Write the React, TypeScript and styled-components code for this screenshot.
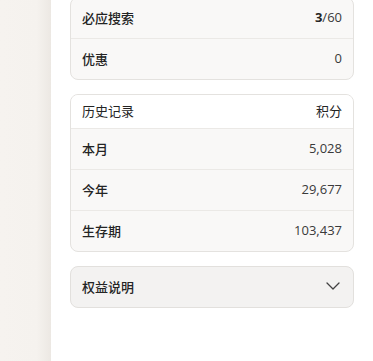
import React from 'react';
import styled, { createGlobalStyle } from 'styled-components';

const GlobalStyle = createGlobalStyle`
  html, body {
    margin: 0;
    padding: 0;
    background: #ffffff;
    overflow: hidden;
  }
  body {
    font-family: "Open Sans", "Noto Sans CJK SC", sans-serif;
    color: #242424;
  }
`;

const Page = styled.div`
  display: flex;
  width: 373px;
  height: 361px;
  overflow: hidden;
`;

const Sidebar = styled.div`
  width: 51px;
  flex-shrink: 0;
  background: linear-gradient(to right, #f6f3ef 0%, #f5f2ee 72%, #ece8e3 100%);
`;

const Main = styled.div`
  flex: 1;
  display: flex;
  flex-direction: column;
  gap: 14px;
  padding: 0 19px;
  margin-top: -3px;
`;

const Card = styled.div`
  border: 1px solid #e4e2df;
  border-radius: 8px;
  overflow: hidden;
  background: #f9f8f7;
`;

const Row = styled.div<{ $header?: boolean }>`
  display: flex;
  align-items: center;
  justify-content: space-between;
  height: ${(p) => (p.$header ? '31px' : '38px')};
  padding: 0 11px 2px;
  font-size: 13px;
  background: ${(p) => (p.$header ? '#ffffff' : 'transparent')};
  & + & {
    border-top: 1px solid #ebe9e6;
  }
`;

const Label = styled.span<{ $regular?: boolean }>`
  font-weight: ${(p) => (p.$regular ? 400 : 500)};
  color: #242424;
`;

const Value = styled.span`
  color: #3a3a3a;
  font-weight: 400;
  b {
    font-weight: 700;
    color: #242424;
  }
`;

const Accordion = styled.button`
  display: flex;
  align-items: center;
  justify-content: space-between;
  box-sizing: border-box;
  height: 42px;
  padding: 0 13px 2px 11px;
  border: 1px solid #e2e0dd;
  border-radius: 8px;
  background: #f3f2f1;
  font-family: inherit;
  font-size: 13px;
  font-weight: 500;
  color: #242424;
  cursor: pointer;
`;

const Chevron = () => (
  <svg width="14" height="8" viewBox="0 0 14 8" fill="none">
    <path d="M1 1l6 6 6-6" stroke="#424242" strokeWidth="1.3" strokeLinecap="round" strokeLinejoin="round" />
  </svg>
);

const history = [
  { label: '本月', value: '5,028' },
  { label: '今年', value: '29,677' },
  { label: '生存期', value: '103,437' },
];

export default function App() {
  return (
    <Page>
      <GlobalStyle />
      <Sidebar />
      <Main>
        <Card>
          <Row>
            <Label>必应搜索</Label>
            <Value>
              <b>3</b>/60
            </Value>
          </Row>
          <Row>
            <Label>优惠</Label>
            <Value>0</Value>
          </Row>
        </Card>
        <Card>
          <Row $header>
            <Label $regular>历史记录</Label>
            <Label $regular>积分</Label>
          </Row>
          {history.map((h) => (
            <Row key={h.label}>
              <Label>{h.label}</Label>
              <Value>{h.value}</Value>
            </Row>
          ))}
        </Card>
        <Accordion>
          权益说明
          <Chevron />
        </Accordion>
      </Main>
    </Page>
  );
}
